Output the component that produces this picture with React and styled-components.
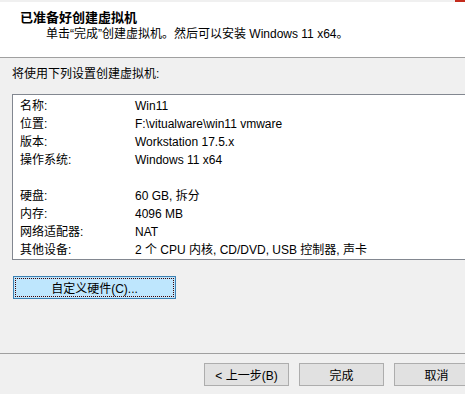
import React from 'react'
import styled, { createGlobalStyle } from 'styled-components'

const GlobalStyle = createGlobalStyle`
    html, body {
        margin: 0;
        padding: 0;
        background: #f0f0f0;
        overflow: hidden;
    }
    body {
        font-family: "Liberation Sans", "Noto Sans CJK SC", sans-serif;
        font-size: 12px;
        color: #000;
    }
`

const settings = [
    ['名称:', 'Win11'],
    ['位置:', 'F:\\vitualware\\win11 vmware'],
    ['版本:', 'Workstation 17.5.x'],
    ['操作系统:', 'Windows 11 x64'],
    null,
    ['硬盘:', '60 GB, 拆分'],
    ['内存:', '4096 MB'],
    ['网络适配器:', 'NAT'],
    ['其他设备:', '2 个 CPU 内核, CD/DVD, USB 控制器, 声卡'],
]

const App = () => {
    return (
        <>
            <GlobalStyle />
            <Window>
                <TopStrip>
                    <CloseEdge />
                </TopStrip>
                <Header>
                    <Title>已准备好创建虚拟机</Title>
                    <Subtitle>单击“完成”创建虚拟机。然后可以安装 Windows 11 x64。</Subtitle>
                </Header>
                <Body>
                    <Intro>将使用下列设置创建虚拟机:</Intro>
                    <ListBox>
                        {settings.map((row, i) =>
                            row ? (
                                <Row key={i}>
                                    <span>{row[0]}</span>
                                    <span>{row[1]}</span>
                                </Row>
                            ) : (
                                <Row key={i} />
                            )
                        )}
                    </ListBox>
                    <CustomButton>自定义硬件(C)...</CustomButton>
                </Body>
                <Footer>
                    <WizardButton>&lt; 上一步(B)</WizardButton>
                    <WizardButton>完成</WizardButton>
                    <WizardButton>取消</WizardButton>
                </Footer>
            </Window>
        </>
    )
}

export default App

const Window = styled.div`
    width: 490px;
    height: 394px;
    display: flex;
    flex-direction: column;
    overflow: hidden;
`

const TopStrip = styled.div`
    height: 2px;
    background: #f0f0f0;
    display: flex;
    justify-content: flex-end;
`

const CloseEdge = styled.div`
    width: 35px;
    height: 2px;
    background: #c42b1c;
`

const Header = styled.div`
    height: 56px;
    box-sizing: border-box;
    background: #fff;
    border-bottom: 1px solid #a0a0a0;
    padding: 8px 0 0 20px;
`

const Title = styled.div`
    font-weight: bold;
    font-size: 13px;
    line-height: 16px;
`

const Subtitle = styled.div`
    line-height: 16px;
    padding-left: 26px;
`

const Body = styled.div`
    flex: 1;
    display: flex;
    flex-direction: column;
    align-items: flex-start;
    padding: 8px 0 0 12px;
`

const Intro = styled.div`
    line-height: 16px;
`

const ListBox = styled.div`
    margin-top: 12px;
    align-self: stretch;
    background: #fff;
    border: 1px solid #828790;
    padding: 2px 0 0 7px;
    height: 166px;
    box-sizing: border-box;
`

const Row = styled.div`
    display: grid;
    grid-template-columns: 115px 1fr;
    height: 18px;
    line-height: 18px;
    white-space: nowrap;
`

const CustomButton = styled.button`
    margin: 16px 0 0 1px;
    width: 163px;
    height: 23px;
    padding: 0;
    font: inherit;
    color: #000;
    background: #bee6fd;
    border: 1px solid #3c7fb1;
    outline: 1px dotted #400;
    outline-offset: -3px;
`

const Footer = styled.div`
    height: 31px;
    border-top: 1px solid #a0a0a0;
    display: flex;
    justify-content: flex-end;
    gap: 10px;
    padding: 9px 11px 0 0;
`

const WizardButton = styled.button`
    width: 85px;
    height: 23px;
    flex-shrink: 0;
    padding: 0;
    font: inherit;
    color: #000;
    background: #e1e1e1;
    border: 1px solid #adadad;
`
